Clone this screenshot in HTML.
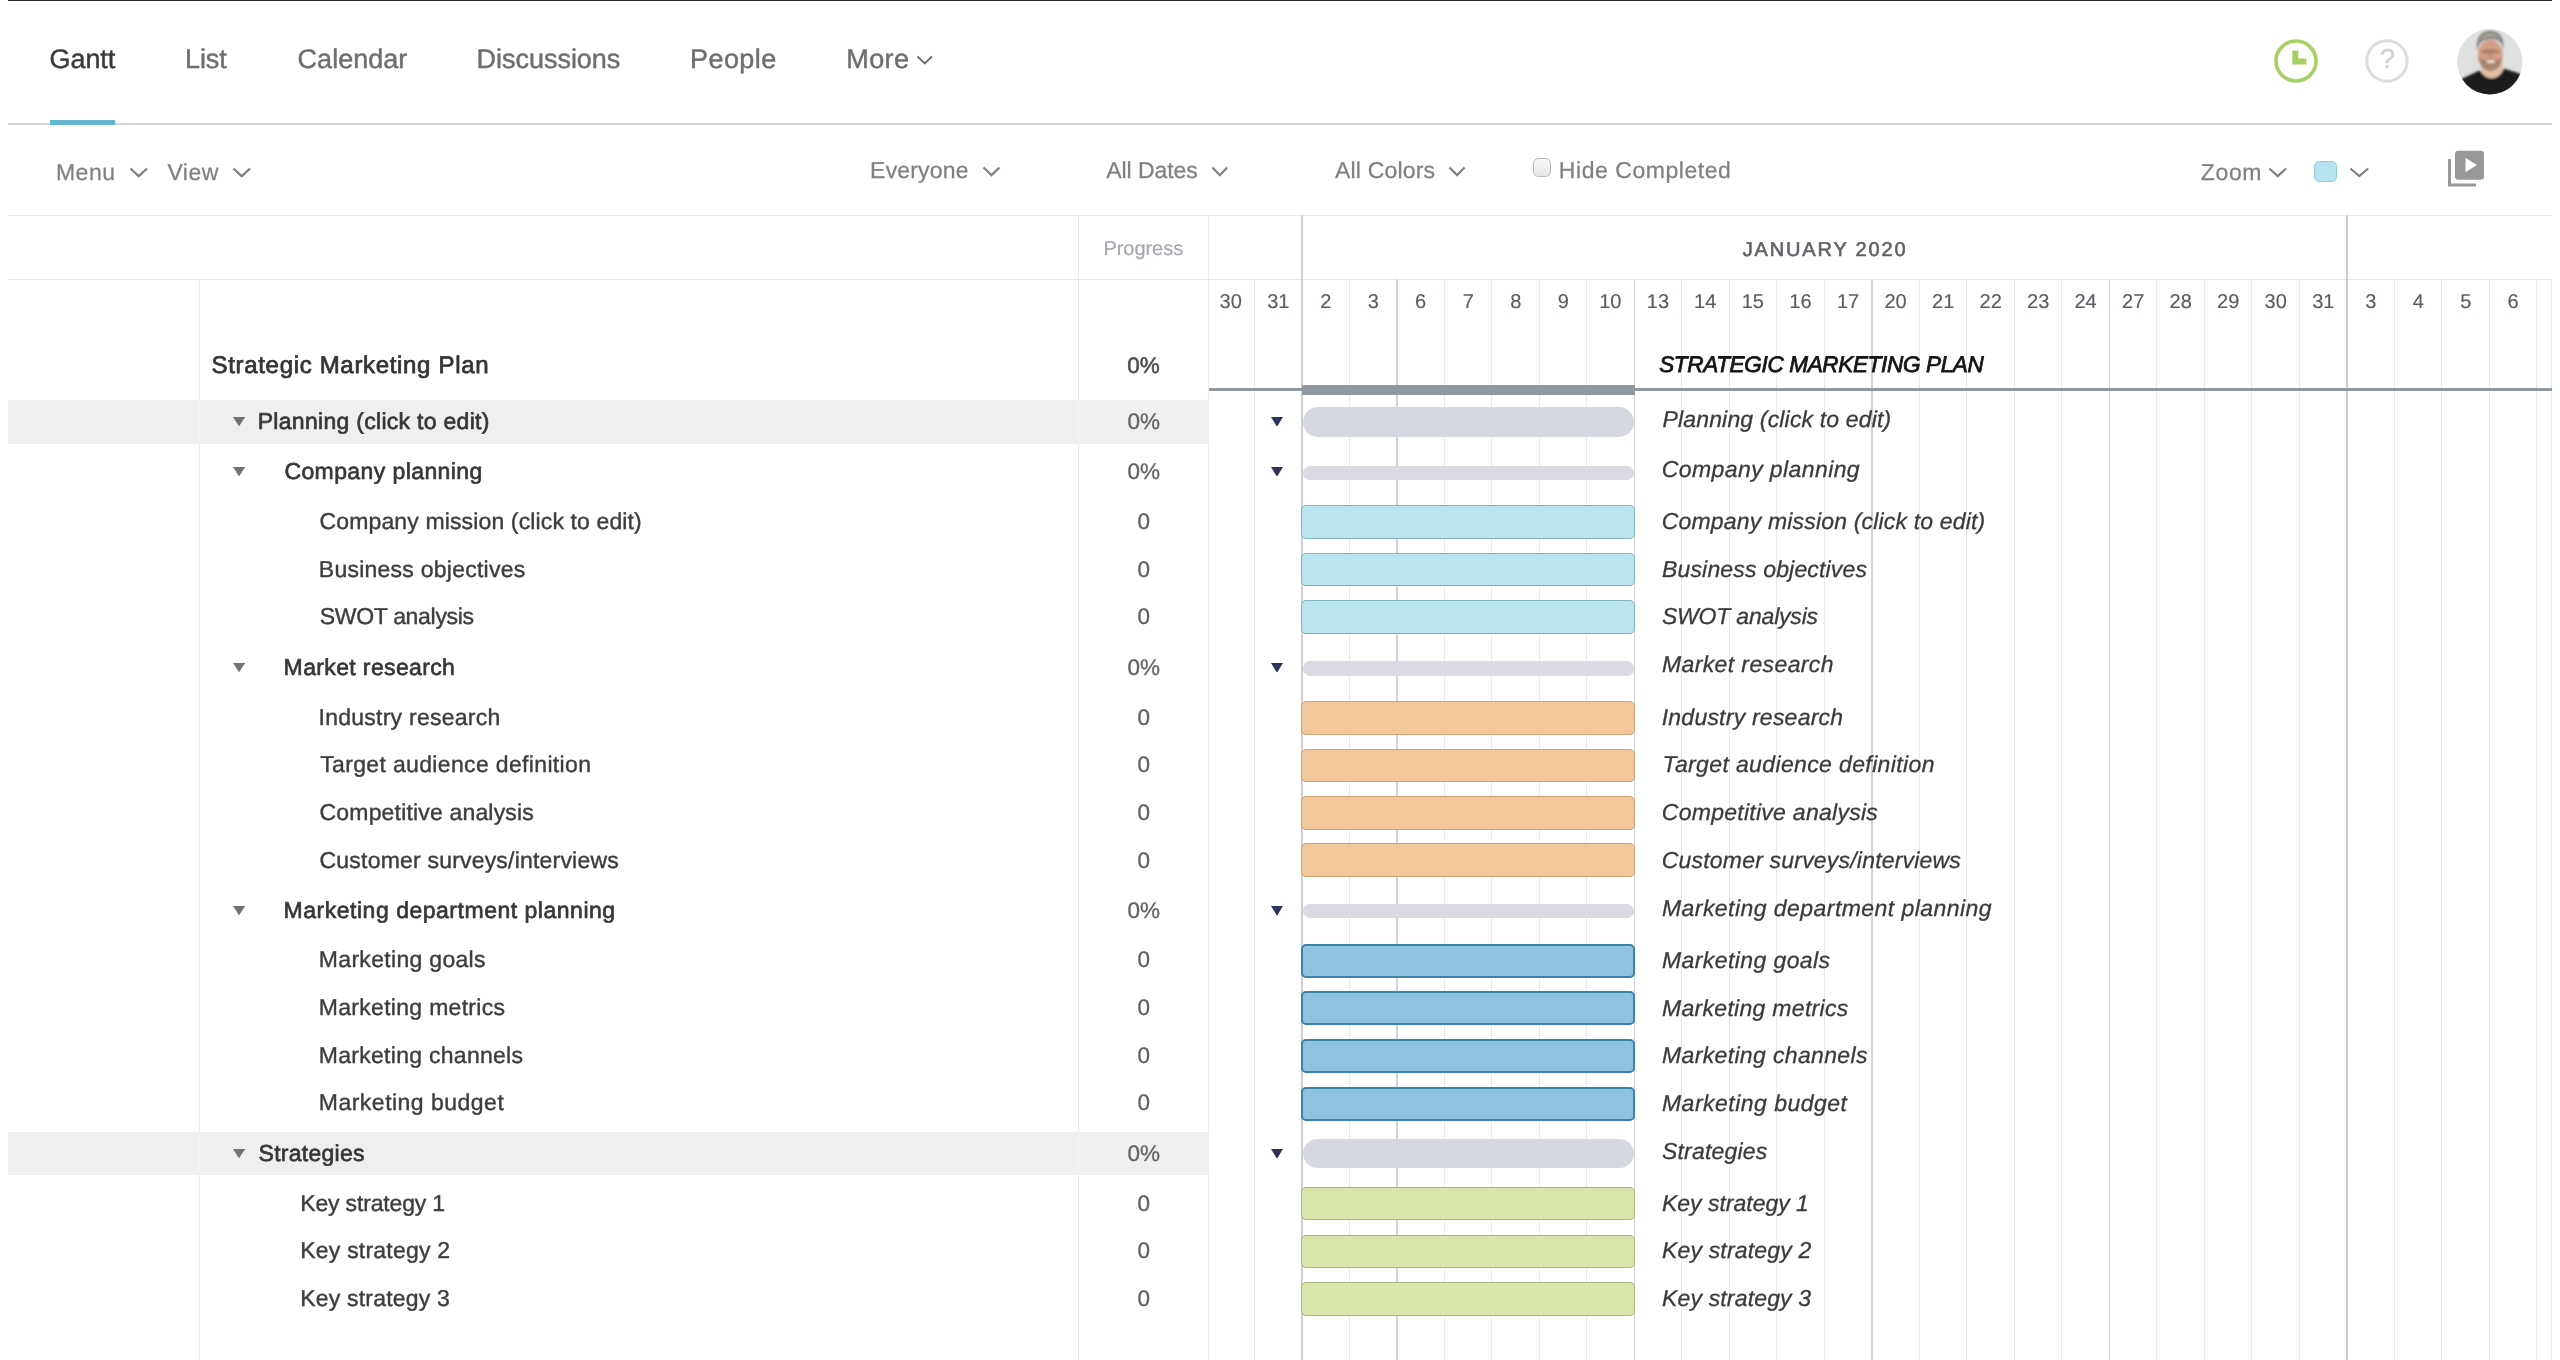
<!DOCTYPE html>
<html><head><meta charset="utf-8"><title>Gantt</title>
<style>
html,body{margin:0;padding:0;background:#fff;font-family:"Liberation Sans",sans-serif;}
body{width:2560px;height:1360px;position:relative;overflow:hidden;font-family:"Liberation Sans",sans-serif;}
.t{position:absolute;white-space:nowrap;margin:0;padding:0;text-rendering:geometricPrecision;}
.r{position:absolute;display:block;}
#w{position:absolute;left:0;top:0;width:2560px;height:1360px;will-change:transform;}
</style></head><body><div id="w">
<div class="r" style="left:8.00px;top:0.00px;width:2543.50px;height:1.00px;background:#262626;"></div>
<div class="t" style="left:49.62px;top:46px;font-size:27px;line-height:27px;color:#3a3a3a;letter-spacing:-0.125px;-webkit-text-stroke:0.45px #3a3a3a;">Gantt</div>
<div class="t" style="left:185.07px;top:46px;font-size:27px;line-height:27px;color:#6e6e6e;letter-spacing:-0.117px;-webkit-text-stroke:0.45px #6e6e6e;">List</div>
<div class="t" style="left:297.62px;top:46px;font-size:27px;line-height:27px;color:#6e6e6e;letter-spacing:0.004px;-webkit-text-stroke:0.45px #6e6e6e;">Calendar</div>
<div class="t" style="left:476.62px;top:46px;font-size:27px;line-height:27px;color:#6e6e6e;letter-spacing:-0.035px;-webkit-text-stroke:0.45px #6e6e6e;">Discussions</div>
<div class="t" style="left:690.08px;top:46px;font-size:27px;line-height:27px;color:#6e6e6e;letter-spacing:0.410px;-webkit-text-stroke:0.45px #6e6e6e;">People</div>
<div class="t" style="left:846.27px;top:46px;font-size:27px;line-height:27px;color:#6e6e6e;letter-spacing:0.383px;-webkit-text-stroke:0.45px #6e6e6e;">More</div>
<svg class="r" style="left:914.50px;top:54.00px" width="19.50" height="12.70" viewBox="-2 -2 19.50 12.70"><path d="M1.25 1.25 L7.75 7.46 L14.25 1.25" fill="none" stroke="#6e6e6e" stroke-width="2" stroke-linecap="square" stroke-linejoin="miter"/></svg>
<div class="r" style="left:8.00px;top:123.20px;width:2544.00px;height:1.80px;background:#d5d5d8;"></div>
<div class="r" style="left:50.00px;top:120.00px;width:65.00px;height:5.00px;background:#62b6cd;"></div>
<div class="t" style="left:55.92px;top:161px;font-size:23px;line-height:23px;color:#808080;letter-spacing:0.558px;-webkit-text-stroke:0.25px #808080;">Menu</div>
<svg class="r" style="left:128.00px;top:165.50px" width="21.50" height="13.50" viewBox="-2 -2 21.50 13.50"><path d="M1.25 1.25 L8.75 8.14 L16.25 1.25" fill="none" stroke="#808080" stroke-width="2.2" stroke-linecap="square" stroke-linejoin="miter"/></svg>
<div class="t" style="left:167.38px;top:161px;font-size:23px;line-height:23px;color:#808080;letter-spacing:0.500px;-webkit-text-stroke:0.25px #808080;">View</div>
<svg class="r" style="left:231.00px;top:165.50px" width="21.50" height="13.50" viewBox="-2 -2 21.50 13.50"><path d="M1.25 1.25 L8.75 8.14 L16.25 1.25" fill="none" stroke="#808080" stroke-width="2.2" stroke-linecap="square" stroke-linejoin="miter"/></svg>
<div class="t" style="left:870.12px;top:159px;font-size:23px;line-height:23px;color:#808080;letter-spacing:0.179px;-webkit-text-stroke:0.25px #808080;">Everyone</div>
<svg class="r" style="left:980.50px;top:164.50px" width="20.90" height="13.50" viewBox="-2 -2 20.90 13.50"><path d="M1.25 1.25 L8.45 8.14 L15.65 1.25" fill="none" stroke="#808080" stroke-width="2.2" stroke-linecap="square" stroke-linejoin="miter"/></svg>
<div class="t" style="left:1106.20px;top:159px;font-size:23px;line-height:23px;color:#808080;letter-spacing:-0.056px;-webkit-text-stroke:0.25px #808080;">All Dates</div>
<svg class="r" style="left:1210.30px;top:164.50px" width="19.70" height="13.50" viewBox="-2 -2 19.70 13.50"><path d="M1.25 1.25 L7.85 8.14 L14.45 1.25" fill="none" stroke="#808080" stroke-width="2.2" stroke-linecap="square" stroke-linejoin="miter"/></svg>
<div class="t" style="left:1335.00px;top:159px;font-size:23px;line-height:23px;color:#808080;letter-spacing:0.186px;-webkit-text-stroke:0.25px #808080;">All Colors</div>
<svg class="r" style="left:1447.30px;top:164.50px" width="20.10" height="13.50" viewBox="-2 -2 20.10 13.50"><path d="M1.25 1.25 L8.05 8.14 L14.85 1.25" fill="none" stroke="#808080" stroke-width="2.2" stroke-linecap="square" stroke-linejoin="miter"/></svg>
<div class="r" style="left:1533px;top:158.4px;width:18.2px;height:18.8px;box-sizing:border-box;border:1.8px solid #b8b8b8;border-radius:5.5px;background:linear-gradient(#f7f7f7,#e7e7e7)"></div>
<div class="t" style="left:1558.83px;top:159px;font-size:23px;line-height:23px;color:#808080;letter-spacing:0.544px;-webkit-text-stroke:0.25px #808080;">Hide Completed</div>
<div class="t" style="left:2200.65px;top:161px;font-size:23px;line-height:23px;color:#808080;letter-spacing:0.700px;-webkit-text-stroke:0.25px #808080;">Zoom</div>
<svg class="r" style="left:2267.00px;top:165.50px" width="21.50" height="13.50" viewBox="-2 -2 21.50 13.50"><path d="M1.25 1.25 L8.75 8.14 L16.25 1.25" fill="none" stroke="#808080" stroke-width="2.2" stroke-linecap="square" stroke-linejoin="miter"/></svg>
<div class="r" style="left:2314px;top:160.5px;width:23px;height:21px;box-sizing:border-box;border:1.5px solid #8fcadb;border-radius:5.5px;background:#b6e3ee"></div>
<svg class="r" style="left:2348.00px;top:165.50px" width="22.60" height="13.50" viewBox="-2 -2 22.60 13.50"><path d="M1.25 1.25 L9.30 8.14 L17.35 1.25" fill="none" stroke="#808080" stroke-width="2.2" stroke-linecap="square" stroke-linejoin="miter"/></svg>
<svg class="r" style="left:2446px;top:149px" width="42" height="40" viewBox="2446 149 42 40"><path d="M2449.5 159 V185 H2476" fill="none" stroke="#989898" stroke-width="3"/><rect x="2455" y="150.8" width="29" height="29" rx="3" fill="#989898"/><path d="M2465.5 158 L2477 165 L2465.5 172 Z" fill="#fff"/></svg>
<svg class="r" style="left:2269.25px;top:33.9px" width="54" height="54" viewBox="-27 -27 54 54"><circle r="20" fill="none" stroke="#a7d062" stroke-width="3.6"/><path d="M-0.7 -10.4 V0.5 H10.4" fill="none" stroke="#a7d062" stroke-width="6" /></svg>
<svg class="r" style="left:2360.3px;top:34.1px" width="54" height="54" viewBox="-27 -27 54 54"><circle r="20.2" fill="none" stroke="#dcdcdc" stroke-width="3"/><text x="0.3" y="7.3" text-anchor="middle" font-family="Liberation Sans, sans-serif" font-size="27.5" fill="#d2d2d2" stroke="#d2d2d2" stroke-width="0.5">?</text></svg>
<svg class="r" style="left:2457px;top:28.6px" width="66" height="66" viewBox="0 0 66 66"><defs><clipPath id="av"><circle cx="32.9" cy="32.8" r="32.7"/></clipPath><filter id="bl" x="-10%" y="-10%" width="120%" height="120%"><feGaussianBlur stdDeviation="0.9"/></filter></defs><g clip-path="url(#av)"><rect width="66" height="66" fill="#dfe0e0"/><g filter="url(#bl)"><path d="M24 36 L24 46 C30 53 40 53 46.5 44 L46 34 Z" fill="#e3bfa8"/><path d="M-2 70 L-2 55 L5.5 49.4 L23 41.3 C27 50.5 41 54 46.8 39.4 L62.4 44.4 L70 52 L70 70 Z" fill="#1d1b1c"/><ellipse cx="33.3" cy="26" rx="12.4" ry="15.2" fill="#d49f87"/><ellipse cx="33.2" cy="22.6" rx="9.3" ry="2.3" fill="#7d5f52" opacity="0.5"/><ellipse cx="33.4" cy="27.5" rx="2.2" ry="3" fill="#c48a74" opacity="0.8"/><path d="M21.5 27 C22 36 27 42 33.5 42 C40 42 45 36 45.5 27 C43 33 39 30 33.5 30.5 C28 30 24 33 21.5 27 Z" fill="#a7846f"/><ellipse cx="33.8" cy="32.6" rx="4.3" ry="1.5" fill="#f0e2da"/><path d="M20.3 22 C17.5 8 25 1.8 33 1.8 C42 1.8 48.5 8 46.3 21 C45.5 16 44 13 41 11.5 C36 9.5 29 10 25 12.5 C22.5 14.5 21 17 20.3 22 Z" fill="#8f8b86"/><path d="M24 9 C28 4.5 37 4 42 8 C37 6.5 29 6.8 24 9 Z" fill="#b9b5ae"/></g></g></svg>
<div class="r" style="left:8.00px;top:215.00px;width:2544.00px;height:1.30px;background:#e7e8ea;"></div>
<div class="r" style="left:8.00px;top:278.95px;width:2544.00px;height:1.30px;background:#e7e8ea;"></div>
<div class="r" style="left:198.80px;top:279.00px;width:1.20px;height:1081.00px;background:#e9e9e9;"></div>
<div class="r" style="left:1078.10px;top:215.00px;width:1.20px;height:1145.00px;background:#e9e9e9;"></div>
<div class="r" style="left:1208.20px;top:215.00px;width:1.20px;height:1145.00px;background:#ebebeb;"></div>
<div class="r" style="left:2551.00px;top:279.00px;width:1.20px;height:1081.00px;background:#e9e9ec;"></div>
<div class="r" style="left:1253.60px;top:279.00px;width:1.00px;height:1081.00px;background:#e9e9ec;"></div>
<div class="r" style="left:1301.05px;top:215.00px;width:1.80px;height:1145.00px;background:#cecece;"></div>
<div class="r" style="left:1348.60px;top:279.00px;width:1.00px;height:1081.00px;background:#e9e9ec;"></div>
<div class="r" style="left:1396.15px;top:279.00px;width:1.50px;height:1081.00px;background:#d4d4d7;"></div>
<div class="r" style="left:1443.60px;top:279.00px;width:1.00px;height:1081.00px;background:#e9e9ec;"></div>
<div class="r" style="left:1491.10px;top:279.00px;width:1.00px;height:1081.00px;background:#e9e9ec;"></div>
<div class="r" style="left:1538.60px;top:279.00px;width:1.00px;height:1081.00px;background:#e9e9ec;"></div>
<div class="r" style="left:1586.10px;top:279.00px;width:1.00px;height:1081.00px;background:#e9e9ec;"></div>
<div class="r" style="left:1633.65px;top:279.00px;width:1.50px;height:1081.00px;background:#d4d4d7;"></div>
<div class="r" style="left:1681.10px;top:279.00px;width:1.00px;height:1081.00px;background:#e9e9ec;"></div>
<div class="r" style="left:1728.60px;top:279.00px;width:1.00px;height:1081.00px;background:#e9e9ec;"></div>
<div class="r" style="left:1776.10px;top:279.00px;width:1.00px;height:1081.00px;background:#e9e9ec;"></div>
<div class="r" style="left:1823.60px;top:279.00px;width:1.00px;height:1081.00px;background:#e9e9ec;"></div>
<div class="r" style="left:1871.15px;top:279.00px;width:1.50px;height:1081.00px;background:#d4d4d7;"></div>
<div class="r" style="left:1918.60px;top:279.00px;width:1.00px;height:1081.00px;background:#e9e9ec;"></div>
<div class="r" style="left:1966.10px;top:279.00px;width:1.00px;height:1081.00px;background:#e9e9ec;"></div>
<div class="r" style="left:2013.60px;top:279.00px;width:1.00px;height:1081.00px;background:#e9e9ec;"></div>
<div class="r" style="left:2061.10px;top:279.00px;width:1.00px;height:1081.00px;background:#e9e9ec;"></div>
<div class="r" style="left:2108.65px;top:279.00px;width:1.50px;height:1081.00px;background:#d4d4d7;"></div>
<div class="r" style="left:2156.10px;top:279.00px;width:1.00px;height:1081.00px;background:#e9e9ec;"></div>
<div class="r" style="left:2203.60px;top:279.00px;width:1.00px;height:1081.00px;background:#e9e9ec;"></div>
<div class="r" style="left:2251.10px;top:279.00px;width:1.00px;height:1081.00px;background:#e9e9ec;"></div>
<div class="r" style="left:2298.60px;top:279.00px;width:1.00px;height:1081.00px;background:#e9e9ec;"></div>
<div class="r" style="left:2346.05px;top:215.00px;width:1.80px;height:1145.00px;background:#cecece;"></div>
<div class="r" style="left:2393.60px;top:279.00px;width:1.00px;height:1081.00px;background:#e9e9ec;"></div>
<div class="r" style="left:2441.10px;top:279.00px;width:1.00px;height:1081.00px;background:#e9e9ec;"></div>
<div class="r" style="left:2488.60px;top:279.00px;width:1.00px;height:1081.00px;background:#e9e9ec;"></div>
<div class="r" style="left:2536.10px;top:279.00px;width:1.00px;height:1081.00px;background:#e9e9ec;"></div>
<div class="t" style="left:1103.38px;top:239px;font-size:20px;line-height:20px;color:#a3a7ae;letter-spacing:-0.036px;-webkit-text-stroke:0.2px #a3a7ae;">Progress</div>
<div class="t" style="left:1742.75px;top:240px;font-size:20px;line-height:20px;color:#5f6367;letter-spacing:1.834px;-webkit-text-stroke:0.6px #5f6367;">JANUARY 2020</div>
<div class="t" style="left:1219.62px;top:292px;font-size:20px;line-height:20px;color:#5a5d62;-webkit-text-stroke:0.15px #5a5d62;">30</div>
<div class="t" style="left:1267.19px;top:292px;font-size:20px;line-height:20px;color:#5a5d62;-webkit-text-stroke:0.15px #5a5d62;">31</div>
<div class="t" style="left:1320.19px;top:292px;font-size:20px;line-height:20px;color:#5a5d62;-webkit-text-stroke:0.15px #5a5d62;">2</div>
<div class="t" style="left:1367.75px;top:292px;font-size:20px;line-height:20px;color:#5a5d62;-webkit-text-stroke:0.15px #5a5d62;">3</div>
<div class="t" style="left:1415.12px;top:292px;font-size:20px;line-height:20px;color:#5a5d62;-webkit-text-stroke:0.15px #5a5d62;">6</div>
<div class="t" style="left:1462.69px;top:292px;font-size:20px;line-height:20px;color:#5a5d62;-webkit-text-stroke:0.15px #5a5d62;">7</div>
<div class="t" style="left:1510.19px;top:292px;font-size:20px;line-height:20px;color:#5a5d62;-webkit-text-stroke:0.15px #5a5d62;">8</div>
<div class="t" style="left:1557.69px;top:292px;font-size:20px;line-height:20px;color:#5a5d62;-webkit-text-stroke:0.15px #5a5d62;">9</div>
<div class="t" style="left:1599.25px;top:292px;font-size:20px;line-height:20px;color:#5a5d62;-webkit-text-stroke:0.15px #5a5d62;">10</div>
<div class="t" style="left:1646.81px;top:292px;font-size:20px;line-height:20px;color:#5a5d62;-webkit-text-stroke:0.15px #5a5d62;">13</div>
<div class="t" style="left:1694.12px;top:292px;font-size:20px;line-height:20px;color:#5a5d62;-webkit-text-stroke:0.15px #5a5d62;">14</div>
<div class="t" style="left:1741.75px;top:292px;font-size:20px;line-height:20px;color:#5a5d62;-webkit-text-stroke:0.15px #5a5d62;">15</div>
<div class="t" style="left:1789.31px;top:292px;font-size:20px;line-height:20px;color:#5a5d62;-webkit-text-stroke:0.15px #5a5d62;">16</div>
<div class="t" style="left:1836.88px;top:292px;font-size:20px;line-height:20px;color:#5a5d62;-webkit-text-stroke:0.15px #5a5d62;">17</div>
<div class="t" style="left:1884.50px;top:292px;font-size:20px;line-height:20px;color:#5a5d62;-webkit-text-stroke:0.15px #5a5d62;">20</div>
<div class="t" style="left:1932.06px;top:292px;font-size:20px;line-height:20px;color:#5a5d62;-webkit-text-stroke:0.15px #5a5d62;">21</div>
<div class="t" style="left:1979.62px;top:292px;font-size:20px;line-height:20px;color:#5a5d62;-webkit-text-stroke:0.15px #5a5d62;">22</div>
<div class="t" style="left:2027.06px;top:292px;font-size:20px;line-height:20px;color:#5a5d62;-webkit-text-stroke:0.15px #5a5d62;">23</div>
<div class="t" style="left:2074.38px;top:292px;font-size:20px;line-height:20px;color:#5a5d62;-webkit-text-stroke:0.15px #5a5d62;">24</div>
<div class="t" style="left:2122.12px;top:292px;font-size:20px;line-height:20px;color:#5a5d62;-webkit-text-stroke:0.15px #5a5d62;">27</div>
<div class="t" style="left:2169.56px;top:292px;font-size:20px;line-height:20px;color:#5a5d62;-webkit-text-stroke:0.15px #5a5d62;">28</div>
<div class="t" style="left:2217.06px;top:292px;font-size:20px;line-height:20px;color:#5a5d62;-webkit-text-stroke:0.15px #5a5d62;">29</div>
<div class="t" style="left:2264.62px;top:292px;font-size:20px;line-height:20px;color:#5a5d62;-webkit-text-stroke:0.15px #5a5d62;">30</div>
<div class="t" style="left:2312.19px;top:292px;font-size:20px;line-height:20px;color:#5a5d62;-webkit-text-stroke:0.15px #5a5d62;">31</div>
<div class="t" style="left:2365.25px;top:292px;font-size:20px;line-height:20px;color:#5a5d62;-webkit-text-stroke:0.15px #5a5d62;">3</div>
<div class="t" style="left:2412.75px;top:292px;font-size:20px;line-height:20px;color:#5a5d62;-webkit-text-stroke:0.15px #5a5d62;">4</div>
<div class="t" style="left:2460.19px;top:292px;font-size:20px;line-height:20px;color:#5a5d62;-webkit-text-stroke:0.15px #5a5d62;">5</div>
<div class="t" style="left:2507.62px;top:292px;font-size:20px;line-height:20px;color:#5a5d62;-webkit-text-stroke:0.15px #5a5d62;">6</div>
<div class="r" style="left:8.00px;top:400.00px;width:1200.50px;height:43.70px;background:#efefef;"></div>
<div class="r" style="left:8.00px;top:1131.80px;width:1200.50px;height:43.60px;background:#efefef;"></div>
<div class="r" style="left:198.80px;top:400.00px;width:1.20px;height:43.60px;background:#f5f5f5;"></div>
<div class="r" style="left:1078.10px;top:400.00px;width:1.20px;height:43.60px;background:#f5f5f5;"></div>
<div class="r" style="left:198.80px;top:1131.80px;width:1.20px;height:43.60px;background:#f5f5f5;"></div>
<div class="r" style="left:1078.10px;top:1131.80px;width:1.20px;height:43.60px;background:#f5f5f5;"></div>
<div class="r" style="left:1209.00px;top:387.70px;width:1343.00px;height:3.50px;background:#9098a2;"></div>
<div class="r" style="left:1302.00px;top:384.50px;width:332.50px;height:10.30px;background:#9098a2;"></div>
<div class="t" style="left:211.57px;top:354px;font-size:24px;line-height:24px;color:#343434;letter-spacing:0.675px;-webkit-text-stroke:0.75px #343434;">Strategic Marketing Plan</div>
<div class="t" style="left:1127.29px;top:355px;font-size:22.5px;line-height:22.5px;color:#4f4f4f;-webkit-text-stroke:0.55px #4f4f4f;">0%</div>
<div class="t" style="left:1659.17px;top:354px;font-size:22.5px;line-height:22.5px;color:#151515;letter-spacing:-0.326px;font-style:italic;-webkit-text-stroke:0.8px #151515;">STRATEGIC MARKETING PLAN</div>
<div class="t" style="left:257.73px;top:410px;font-size:23px;line-height:23px;color:#363636;letter-spacing:0.293px;-webkit-text-stroke:0.65px #363636;">Planning (click to edit)</div>
<div class="t" style="left:1127.49px;top:411px;font-size:22.5px;line-height:22.5px;color:#636363;-webkit-text-stroke:0.3px #636363;">0%</div>
<svg class="r" style="left:233.20px;top:416.80px" width="12.10" height="9.30" viewBox="0 0 12.10 9.30"><path d="M0 0 H12.10 L6.05 9.30 Z" fill="#727272"/></svg>
<svg class="r" style="left:1271.20px;top:416.60px" width="12.00" height="9.80" viewBox="0 0 12.00 9.80"><path d="M0 0 H12.00 L6.00 9.80 Z" fill="#30335a"/></svg>
<div class="r" style="left:1302.50px;top:406.85px;width:331.50px;height:29.80px;background:#d6d8e1;border-radius:15px;"></div>
<div class="t" style="left:1662.47px;top:408px;font-size:23px;line-height:23px;color:#3a3a3a;letter-spacing:0.164px;font-style:italic;-webkit-text-stroke:0.3px #3a3a3a;">Planning (click to edit)</div>
<div class="t" style="left:284.38px;top:460px;font-size:23px;line-height:23px;color:#363636;letter-spacing:0.410px;-webkit-text-stroke:0.65px #363636;">Company planning</div>
<div class="t" style="left:1127.49px;top:461px;font-size:22.5px;line-height:22.5px;color:#636363;-webkit-text-stroke:0.3px #636363;">0%</div>
<svg class="r" style="left:233.20px;top:466.90px" width="12.10" height="9.30" viewBox="0 0 12.10 9.30"><path d="M0 0 H12.10 L6.05 9.30 Z" fill="#727272"/></svg>
<svg class="r" style="left:1271.20px;top:466.70px" width="12.00" height="9.80" viewBox="0 0 12.00 9.80"><path d="M0 0 H12.00 L6.00 9.80 Z" fill="#30335a"/></svg>
<div class="r" style="left:1302.50px;top:465.60px;width:331.50px;height:14.20px;background:#d9dae2;border-radius:7.1px;"></div>
<div class="t" style="left:1661.75px;top:458px;font-size:23px;line-height:23px;color:#3a3a3a;letter-spacing:0.408px;font-style:italic;-webkit-text-stroke:0.3px #3a3a3a;">Company planning</div>
<div class="t" style="left:319.57px;top:510px;font-size:23px;line-height:23px;color:#3d3d3d;letter-spacing:0.132px;-webkit-text-stroke:0.4px #3d3d3d;">Company mission (click to edit)</div>
<div class="t" style="left:1137.55px;top:511px;font-size:22.5px;line-height:22.5px;color:#636363;-webkit-text-stroke:0.3px #636363;">0</div>
<div class="r" style="left:1301.2px;top:505.10px;width:333.6px;height:33.6px;box-sizing:border-box;background:#bae4ee;border:1.8px solid #7fb3bf;border-radius:5px"></div>
<div class="t" style="left:1661.75px;top:510px;font-size:23px;line-height:23px;color:#3a3a3a;letter-spacing:0.175px;font-style:italic;-webkit-text-stroke:0.3px #3a3a3a;">Company mission (click to edit)</div>
<div class="t" style="left:318.82px;top:558px;font-size:23px;line-height:23px;color:#3d3d3d;letter-spacing:0.246px;-webkit-text-stroke:0.4px #3d3d3d;">Business objectives</div>
<div class="t" style="left:1137.55px;top:559px;font-size:22.5px;line-height:22.5px;color:#636363;-webkit-text-stroke:0.3px #636363;">0</div>
<div class="r" style="left:1301.2px;top:552.80px;width:333.6px;height:33.6px;box-sizing:border-box;background:#bae4ee;border:1.8px solid #7fb3bf;border-radius:5px"></div>
<div class="t" style="left:1661.97px;top:558px;font-size:23px;line-height:23px;color:#3a3a3a;letter-spacing:0.168px;font-style:italic;-webkit-text-stroke:0.3px #3a3a3a;">Business objectives</div>
<div class="t" style="left:319.70px;top:605px;font-size:23px;line-height:23px;color:#3d3d3d;letter-spacing:-0.304px;-webkit-text-stroke:0.4px #3d3d3d;">SWOT analysis</div>
<div class="t" style="left:1137.55px;top:606px;font-size:22.5px;line-height:22.5px;color:#636363;-webkit-text-stroke:0.3px #636363;">0</div>
<div class="r" style="left:1301.2px;top:600.45px;width:333.6px;height:33.6px;box-sizing:border-box;background:#bae4ee;border:1.8px solid #7fb3bf;border-radius:5px"></div>
<div class="t" style="left:1661.97px;top:605px;font-size:23px;line-height:23px;color:#3a3a3a;letter-spacing:-0.198px;font-style:italic;-webkit-text-stroke:0.3px #3a3a3a;">SWOT analysis</div>
<div class="t" style="left:283.62px;top:656px;font-size:23px;line-height:23px;color:#363636;letter-spacing:0.366px;-webkit-text-stroke:0.65px #363636;">Market research</div>
<div class="t" style="left:1127.49px;top:657px;font-size:22.5px;line-height:22.5px;color:#636363;-webkit-text-stroke:0.3px #636363;">0%</div>
<svg class="r" style="left:233.20px;top:662.90px" width="12.10" height="9.30" viewBox="0 0 12.10 9.30"><path d="M0 0 H12.10 L6.05 9.30 Z" fill="#727272"/></svg>
<svg class="r" style="left:1271.20px;top:662.70px" width="12.00" height="9.80" viewBox="0 0 12.00 9.80"><path d="M0 0 H12.00 L6.00 9.80 Z" fill="#30335a"/></svg>
<div class="r" style="left:1302.50px;top:661.40px;width:331.50px;height:14.20px;background:#d9dae2;border-radius:7.1px;"></div>
<div class="t" style="left:1661.97px;top:653px;font-size:23px;line-height:23px;color:#3a3a3a;letter-spacing:0.386px;font-style:italic;-webkit-text-stroke:0.3px #3a3a3a;">Market research</div>
<div class="t" style="left:318.57px;top:706px;font-size:23px;line-height:23px;color:#3d3d3d;letter-spacing:0.248px;-webkit-text-stroke:0.4px #3d3d3d;">Industry research</div>
<div class="t" style="left:1137.55px;top:707px;font-size:22.5px;line-height:22.5px;color:#636363;-webkit-text-stroke:0.3px #636363;">0</div>
<div class="r" style="left:1301.2px;top:701.30px;width:333.6px;height:33.6px;box-sizing:border-box;background:#f3c79c;border:1.8px solid #c9a172;border-radius:5px"></div>
<div class="t" style="left:1661.72px;top:706px;font-size:23px;line-height:23px;color:#3a3a3a;letter-spacing:0.228px;font-style:italic;-webkit-text-stroke:0.3px #3a3a3a;">Industry research</div>
<div class="t" style="left:320.20px;top:753px;font-size:23px;line-height:23px;color:#3d3d3d;letter-spacing:0.346px;-webkit-text-stroke:0.4px #3d3d3d;">Target audience definition</div>
<div class="t" style="left:1137.55px;top:754px;font-size:22.5px;line-height:22.5px;color:#636363;-webkit-text-stroke:0.3px #636363;">0</div>
<div class="r" style="left:1301.2px;top:748.60px;width:333.6px;height:33.6px;box-sizing:border-box;background:#f3c79c;border:1.8px solid #c9a172;border-radius:5px"></div>
<div class="t" style="left:1662.60px;top:753px;font-size:23px;line-height:23px;color:#3a3a3a;letter-spacing:0.372px;font-style:italic;-webkit-text-stroke:0.3px #3a3a3a;">Target audience definition</div>
<div class="t" style="left:319.57px;top:801px;font-size:23px;line-height:23px;color:#3d3d3d;letter-spacing:0.174px;-webkit-text-stroke:0.4px #3d3d3d;">Competitive analysis</div>
<div class="t" style="left:1137.55px;top:802px;font-size:22.5px;line-height:22.5px;color:#636363;-webkit-text-stroke:0.3px #636363;">0</div>
<div class="r" style="left:1301.2px;top:796.10px;width:333.6px;height:33.6px;box-sizing:border-box;background:#f3c79c;border:1.8px solid #c9a172;border-radius:5px"></div>
<div class="t" style="left:1661.75px;top:801px;font-size:23px;line-height:23px;color:#3a3a3a;letter-spacing:0.272px;font-style:italic;-webkit-text-stroke:0.3px #3a3a3a;">Competitive analysis</div>
<div class="t" style="left:319.57px;top:849px;font-size:23px;line-height:23px;color:#3d3d3d;letter-spacing:0.199px;-webkit-text-stroke:0.4px #3d3d3d;">Customer surveys/interviews</div>
<div class="t" style="left:1137.55px;top:850px;font-size:22.5px;line-height:22.5px;color:#636363;-webkit-text-stroke:0.3px #636363;">0</div>
<div class="r" style="left:1301.2px;top:843.45px;width:333.6px;height:33.6px;box-sizing:border-box;background:#f3c79c;border:1.8px solid #c9a172;border-radius:5px"></div>
<div class="t" style="left:1661.75px;top:849px;font-size:23px;line-height:23px;color:#3a3a3a;letter-spacing:0.198px;font-style:italic;-webkit-text-stroke:0.3px #3a3a3a;">Customer surveys/interviews</div>
<div class="t" style="left:283.62px;top:899px;font-size:23px;line-height:23px;color:#363636;letter-spacing:0.516px;-webkit-text-stroke:0.65px #363636;">Marketing department planning</div>
<div class="t" style="left:1127.49px;top:900px;font-size:22.5px;line-height:22.5px;color:#636363;-webkit-text-stroke:0.3px #636363;">0%</div>
<svg class="r" style="left:233.20px;top:906.20px" width="12.10" height="9.30" viewBox="0 0 12.10 9.30"><path d="M0 0 H12.10 L6.05 9.30 Z" fill="#727272"/></svg>
<svg class="r" style="left:1271.20px;top:906.00px" width="12.00" height="9.80" viewBox="0 0 12.00 9.80"><path d="M0 0 H12.00 L6.00 9.80 Z" fill="#30335a"/></svg>
<div class="r" style="left:1302.50px;top:904.15px;width:331.50px;height:14.20px;background:#d9dae2;border-radius:7.1px;"></div>
<div class="t" style="left:1661.97px;top:897px;font-size:23px;line-height:23px;color:#3a3a3a;letter-spacing:0.448px;font-style:italic;-webkit-text-stroke:0.3px #3a3a3a;">Marketing department planning</div>
<div class="t" style="left:318.82px;top:948px;font-size:23px;line-height:23px;color:#3d3d3d;letter-spacing:0.311px;-webkit-text-stroke:0.4px #3d3d3d;">Marketing goals</div>
<div class="t" style="left:1137.55px;top:949px;font-size:22.5px;line-height:22.5px;color:#636363;-webkit-text-stroke:0.3px #636363;">0</div>
<div class="r" style="left:1301.2px;top:943.95px;width:333.6px;height:33.6px;box-sizing:border-box;background:#8fc3e0;border:2.2px solid #3b83a8;border-radius:5px"></div>
<div class="t" style="left:1661.97px;top:949px;font-size:23px;line-height:23px;color:#3a3a3a;letter-spacing:0.411px;font-style:italic;-webkit-text-stroke:0.3px #3a3a3a;">Marketing goals</div>
<div class="t" style="left:318.82px;top:996px;font-size:23px;line-height:23px;color:#3d3d3d;letter-spacing:0.295px;-webkit-text-stroke:0.4px #3d3d3d;">Marketing metrics</div>
<div class="t" style="left:1137.55px;top:997px;font-size:22.5px;line-height:22.5px;color:#636363;-webkit-text-stroke:0.3px #636363;">0</div>
<div class="r" style="left:1301.2px;top:991.45px;width:333.6px;height:33.6px;box-sizing:border-box;background:#8fc3e0;border:2.2px solid #3b83a8;border-radius:5px"></div>
<div class="t" style="left:1661.97px;top:997px;font-size:23px;line-height:23px;color:#3a3a3a;letter-spacing:0.302px;font-style:italic;-webkit-text-stroke:0.3px #3a3a3a;">Marketing metrics</div>
<div class="t" style="left:318.82px;top:1044px;font-size:23px;line-height:23px;color:#3d3d3d;letter-spacing:0.278px;-webkit-text-stroke:0.4px #3d3d3d;">Marketing channels</div>
<div class="t" style="left:1137.55px;top:1045px;font-size:22.5px;line-height:22.5px;color:#636363;-webkit-text-stroke:0.3px #636363;">0</div>
<div class="r" style="left:1301.2px;top:1039.45px;width:333.6px;height:33.6px;box-sizing:border-box;background:#8fc3e0;border:2.2px solid #3b83a8;border-radius:5px"></div>
<div class="t" style="left:1661.97px;top:1044px;font-size:23px;line-height:23px;color:#3a3a3a;letter-spacing:0.354px;font-style:italic;-webkit-text-stroke:0.3px #3a3a3a;">Marketing channels</div>
<div class="t" style="left:318.82px;top:1091px;font-size:23px;line-height:23px;color:#3d3d3d;letter-spacing:0.483px;-webkit-text-stroke:0.4px #3d3d3d;">Marketing budget</div>
<div class="t" style="left:1137.55px;top:1092px;font-size:22.5px;line-height:22.5px;color:#636363;-webkit-text-stroke:0.3px #636363;">0</div>
<div class="r" style="left:1301.2px;top:1086.95px;width:333.6px;height:33.6px;box-sizing:border-box;background:#8fc3e0;border:2.2px solid #3b83a8;border-radius:5px"></div>
<div class="t" style="left:1661.97px;top:1092px;font-size:23px;line-height:23px;color:#3a3a3a;letter-spacing:0.480px;font-style:italic;-webkit-text-stroke:0.3px #3a3a3a;">Marketing budget</div>
<div class="t" style="left:258.60px;top:1142px;font-size:23px;line-height:23px;color:#363636;letter-spacing:0.261px;-webkit-text-stroke:0.65px #363636;">Strategies</div>
<div class="t" style="left:1127.49px;top:1143px;font-size:22.5px;line-height:22.5px;color:#636363;-webkit-text-stroke:0.3px #636363;">0%</div>
<svg class="r" style="left:233.20px;top:1148.70px" width="12.10" height="9.30" viewBox="0 0 12.10 9.30"><path d="M0 0 H12.10 L6.05 9.30 Z" fill="#727272"/></svg>
<svg class="r" style="left:1271.20px;top:1148.50px" width="12.00" height="9.80" viewBox="0 0 12.00 9.80"><path d="M0 0 H12.00 L6.00 9.80 Z" fill="#30335a"/></svg>
<div class="r" style="left:1302.50px;top:1138.70px;width:331.50px;height:29.80px;background:#d6d8e1;border-radius:15px;"></div>
<div class="t" style="left:1661.97px;top:1140px;font-size:23px;line-height:23px;color:#3a3a3a;letter-spacing:0.192px;font-style:italic;-webkit-text-stroke:0.3px #3a3a3a;">Strategies</div>
<div class="t" style="left:300.23px;top:1192px;font-size:23px;line-height:23px;color:#3d3d3d;letter-spacing:-0.163px;-webkit-text-stroke:0.4px #3d3d3d;">Key strategy 1</div>
<div class="t" style="left:1137.55px;top:1193px;font-size:22.5px;line-height:22.5px;color:#636363;-webkit-text-stroke:0.3px #636363;">0</div>
<div class="r" style="left:1301.2px;top:1186.50px;width:333.6px;height:33.6px;box-sizing:border-box;background:#d8e6ac;border:1.8px solid #a8b67b;border-radius:5px"></div>
<div class="t" style="left:1661.97px;top:1192px;font-size:23px;line-height:23px;color:#3a3a3a;letter-spacing:-0.008px;font-style:italic;-webkit-text-stroke:0.3px #3a3a3a;">Key strategy 1</div>
<div class="t" style="left:300.23px;top:1239px;font-size:23px;line-height:23px;color:#3d3d3d;letter-spacing:0.223px;-webkit-text-stroke:0.4px #3d3d3d;">Key strategy 2</div>
<div class="t" style="left:1137.55px;top:1240px;font-size:22.5px;line-height:22.5px;color:#636363;-webkit-text-stroke:0.3px #636363;">0</div>
<div class="r" style="left:1301.2px;top:1234.50px;width:333.6px;height:33.6px;box-sizing:border-box;background:#d8e6ac;border:1.8px solid #a8b67b;border-radius:5px"></div>
<div class="t" style="left:1661.97px;top:1239px;font-size:23px;line-height:23px;color:#3a3a3a;letter-spacing:0.175px;font-style:italic;-webkit-text-stroke:0.3px #3a3a3a;">Key strategy 2</div>
<div class="t" style="left:300.23px;top:1287px;font-size:23px;line-height:23px;color:#3d3d3d;letter-spacing:0.204px;-webkit-text-stroke:0.4px #3d3d3d;">Key strategy 3</div>
<div class="t" style="left:1137.55px;top:1288px;font-size:22.5px;line-height:22.5px;color:#636363;-webkit-text-stroke:0.3px #636363;">0</div>
<div class="r" style="left:1301.2px;top:1282.10px;width:333.6px;height:33.6px;box-sizing:border-box;background:#d8e6ac;border:1.8px solid #a8b67b;border-radius:5px"></div>
<div class="t" style="left:1661.97px;top:1287px;font-size:23px;line-height:23px;color:#3a3a3a;letter-spacing:0.165px;font-style:italic;-webkit-text-stroke:0.3px #3a3a3a;">Key strategy 3</div>
</div></body></html>
